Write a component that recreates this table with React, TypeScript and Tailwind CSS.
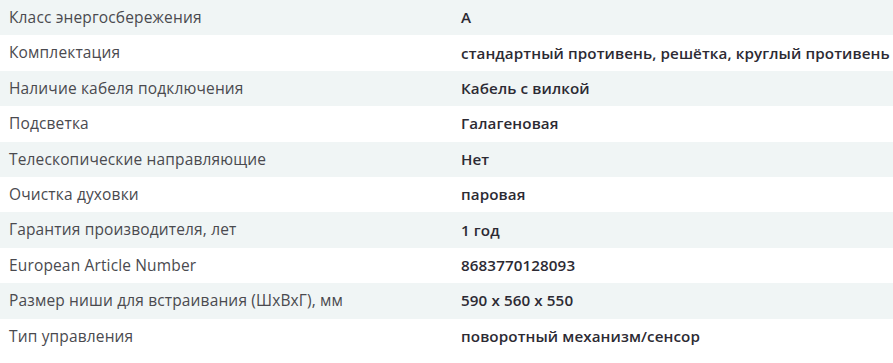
const rows: [string, string][] = [
  ["Класс энергосбережения", "A"],
  ["Комплектация", "стандартный противень, решётка, круглый противень"],
  ["Наличие кабеля подключения", "Кабель с вилкой"],
  ["Подсветка", "Галагеновая"],
  ["Телескопические направляющие", "Нет"],
  ["Очистка духовки", "паровая"],
  ["Гарантия производителя, лет", "1 год"],
  ["European Article Number", "8683770128093"],
  ["Размер ниши для встраивания (ШхВхГ), мм", "590 x 560 x 550"],
  ["Тип управления", "поворотный механизм/сенсор"],
];

export default function App() {
  return (
    <div className="w-[893px] h-[363px] bg-white" style={{ fontFamily: '"Open Sans", "Noto Sans", sans-serif' }}>
      {rows.map(([label, value], i) => (
        <div
          key={label}
          className={`flex h-[35.4px] items-center ${i % 2 === 0 ? "bg-[#f0f5f5]" : "bg-white"}`}
        >
          <div className="w-[461px] shrink-0 pl-[9px] text-[15.5px] tracking-[0.15px] text-[#4a4a4f] whitespace-nowrap">
            {label}
          </div>
          <div className="text-[15.2px] tracking-[0.1px] font-semibold text-[#2c2a33] whitespace-nowrap">{value}</div>
        </div>
      ))}
    </div>
  );
}
